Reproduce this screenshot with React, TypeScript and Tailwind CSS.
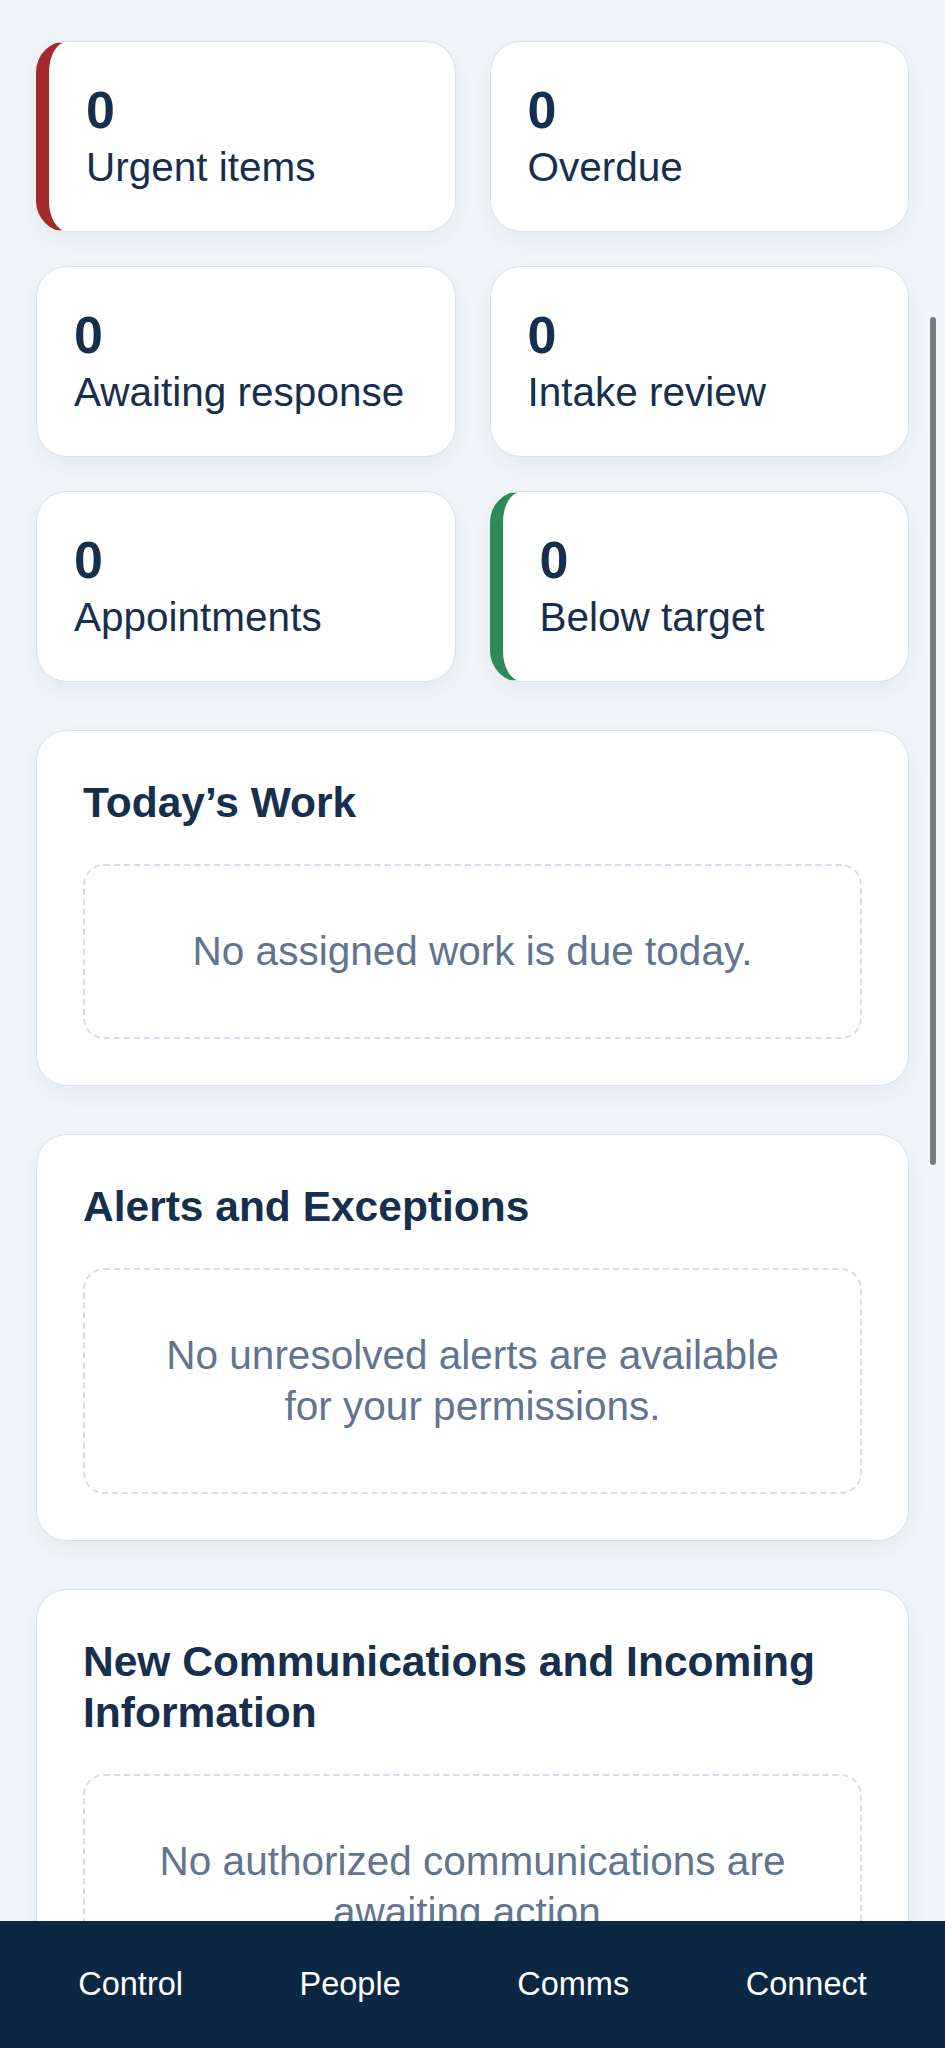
import React from 'react';

type Stat = {
  value: number;
  label: string;
  accent?: 'red' | 'green';
};

const stats: Stat[] = [
  { value: 0, label: 'Urgent items', accent: 'red' },
  { value: 0, label: 'Overdue' },
  { value: 0, label: 'Awaiting response' },
  { value: 0, label: 'Intake review' },
  { value: 0, label: 'Appointments' },
  { value: 0, label: 'Below target', accent: 'green' },
];

const sections = [
  { title: "Today\u2019s Work", empty: 'No assigned work is due today.' },
  { title: 'Alerts and Exceptions', empty: 'No unresolved alerts are available for your permissions.' },
  { title: 'New Communications and Incoming Information', empty: 'No authorized communications are awaiting action.' },
];

const navItems = ['Control', 'People', 'Comms', 'Connect'];

const StatCard: React.FC<{ stat: Stat }> = ({ stat }) => {
  // accent cards get a thick coloured left edge
  let edge = 'border-[#d7e1ec]';
  if (stat.accent === 'red') edge = 'border-[#d7e1ec] border-l-[13px] border-l-[#a52a2a]';
  if (stat.accent === 'green') edge = 'border-[#d7e1ec] border-l-[13px] border-l-[#2e8b57]';

  return (
    <div
      className={`flex flex-col rounded-[31px] border bg-white px-[37px] pt-[37px] pb-[38px] shadow-[0_8px_22px_rgba(20,50,90,0.06)] ${edge}`}
    >
      <span className="text-[52px] font-bold leading-[62px] text-[#15304e]">{stat.value}</span>
      <span className="text-[40.5px] leading-[52px] text-[#15304e]">{stat.label}</span>
    </div>
  );
};

const SectionCard: React.FC<{ title: string; empty: string }> = ({ title, empty }) => (
  <section className="rounded-[31px] border border-[#d7e1ec] bg-white p-[46px] shadow-[0_8px_22px_rgba(20,50,90,0.06)]">
    <h2 className="text-[42.5px] font-bold leading-[51px] text-[#15304e]">{title}</h2>
    <div className="mt-[36px] rounded-[21px] border-2 border-dashed border-[#d3deea] px-[60px] py-[60px] text-center text-[40.5px] leading-[51px] text-[#5f7590]">
      {empty}
    </div>
  </section>
);

export default function App() {
  return (
    <div className="relative flex h-[2048px] w-full flex-col overflow-hidden bg-[#f1f5f9] font-['Liberation_Sans',Arial,sans-serif]">
      <main className="min-h-0 flex-1 overflow-hidden px-[36px] pt-[41px]">
        <div className="grid grid-cols-2 gap-[34px]">
          {stats.map((s) => (
            <StatCard key={s.label} stat={s} />
          ))}
        </div>

        <div className="mt-[48px] flex flex-col gap-[48px]">
          {sections.map((s) => (
            <SectionCard key={s.title} title={s.title} empty={s.empty} />
          ))}
        </div>
      </main>

      <nav className="flex h-[127px] shrink-0 items-center justify-around bg-[#0c2743] px-5">
        {navItems.map((item) => (
          <button key={item} className="text-[32.5px] leading-none text-white">
            {item}
          </button>
        ))}
      </nav>

      {/* overlay scrollbar */}
      <div className="absolute right-[9px] top-[317px] h-[848px] w-[6px] rounded-full bg-[#7b7b7b]" />
    </div>
  );
}
